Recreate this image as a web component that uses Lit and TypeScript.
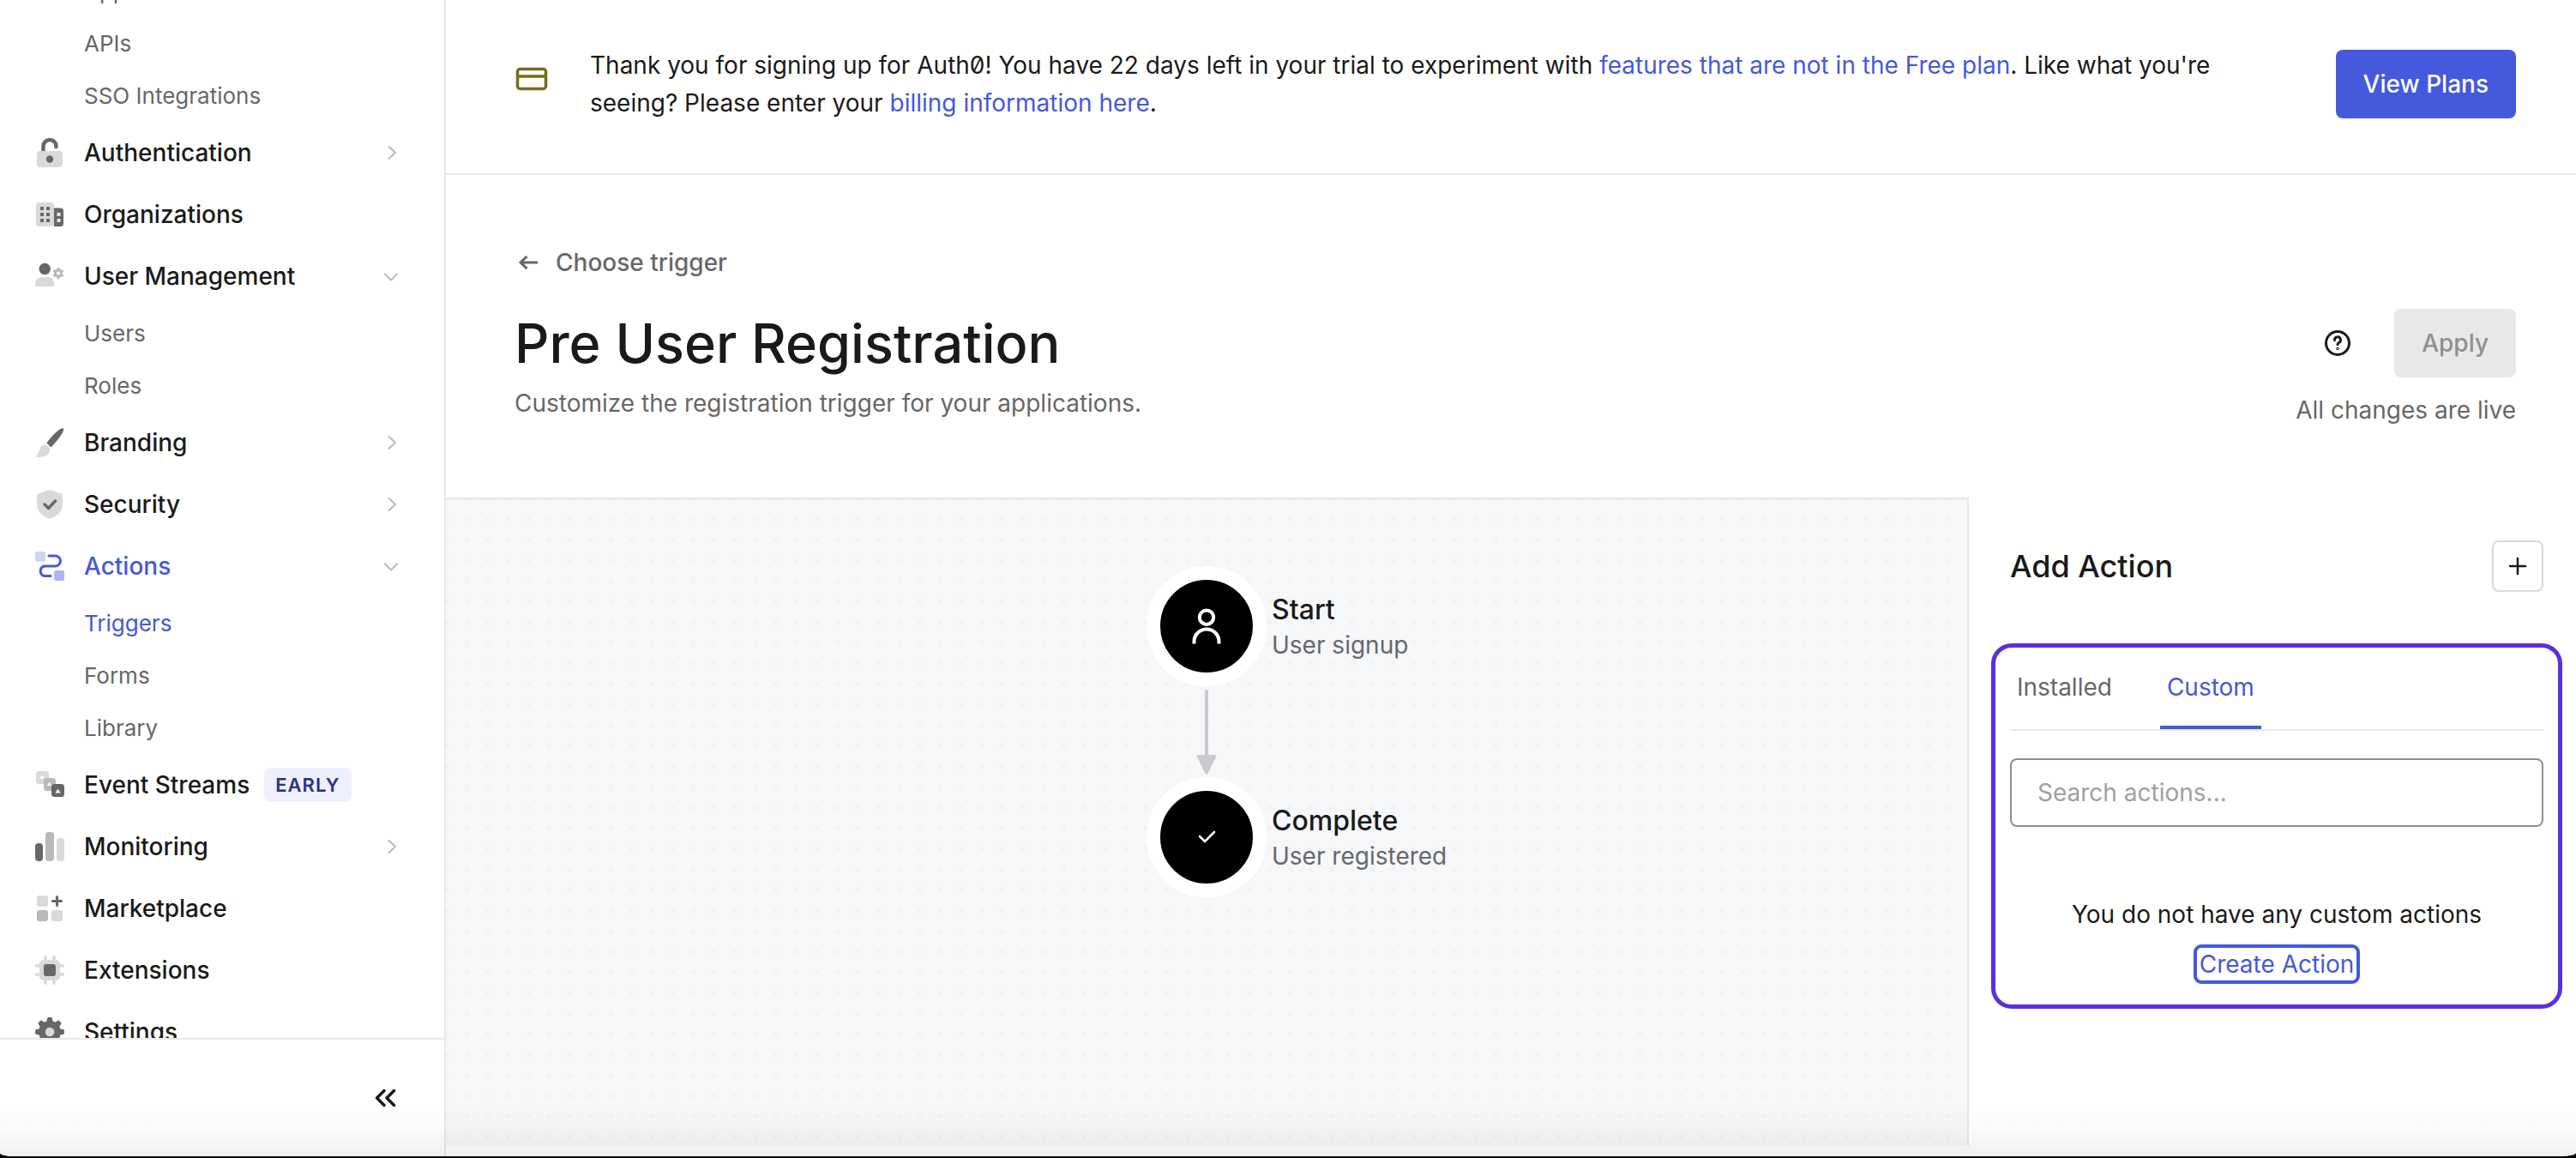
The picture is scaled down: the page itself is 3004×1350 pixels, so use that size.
import { LitElement, html, css, svg, nothing } from "lit";
import { customElement, query } from "lit/decorators.js";
import { classMap } from "lit/directives/class-map.js";

const LIGHT = "#d9d9d9";
const MID = "#b9b9b9";
const DARK = "#676767";

const gearPath = (cx: number, cy: number, teeth: number, inner: number, outer: number): string => {
  const points: string[] = [];
  const step = (Math.PI * 2) / teeth;
  for (let i = 0; i < teeth; i++) {
    const a = i * step - Math.PI / 2;
    for (const [f, r] of [[-0.3, inner], [-0.14, outer], [0.14, outer], [0.3, inner]]) {
      points.push(`${(cx + Math.cos(a + f * step) * r).toFixed(2)},${(cy + Math.sin(a + f * step) * r).toFixed(2)}`);
    }
  }
  return points.join(" ");
};

/* Navigation icons share a 36-unit box centred on its row. */
const icons: Record<string, unknown> = {
  lock: svg`<rect x="3" y="16" width="30" height="19" rx="4" fill=${LIGHT}/>
    <path d="M10.500 16V10.500a7.500 7.500 0 0 1 15 0V11" fill="none" stroke=${DARK} stroke-width="4.500"/>
    <circle cx="25.300" cy="11.300" r="2.200" fill=${DARK}/><circle cx="18" cy="25.500" r="4.200" fill=${DARK}/>`,
  organization: svg`<rect x="2" y="4" width="21" height="28" rx="3.500" fill=${LIGHT}/>
    <path d="M23 10.500h7.500a3.500 3.500 0 0 1 3.500 3.500v14.500a3.500 3.500 0 0 1-3.500 3.500H23z" fill=${DARK}/>
    <g fill=${DARK}>${[9, 16, 23].map((y) => svg`<rect x="7" y=${y} width="4" height="4" rx="0.500"/><rect x="14" y=${y} width="4" height="4" rx="0.500"/>`)}</g>
    <rect x="26.500" y="16" width="4" height="4" fill="#e8e8e8"/><rect x="26.500" y="23" width="4" height="4" fill="#e8e8e8"/>`,
  users: svg`<circle cx="12.200" cy="9.500" r="6.700" fill=${DARK}/>
    <path d="M1 27.500c0-5 3.500-8.500 8-8.500h7c4.500 0 7 3.500 7 8.500 0 1.800-.8 2.500-2.500 2.500H3.500C1.800 30 1 29.300 1 27.500z" fill=${LIGHT}/>
    <polygon points=${gearPath(28, 14.5, 6, 4.6, 6.2)} fill=${MID} stroke=${MID} stroke-linejoin="round"/><circle cx="28" cy="14.500" r="2" fill="#fff"/>`,
  brush: svg`<path d="M14.500 18.500C18 13 26 4 31.500 1.500c2-1 3.200.2 2.500 2.200C32 9.500 25 18 19.500 23.500z" fill=${DARK}/>
    <path d="M12.500 20.500c3 0 5.500 2.500 5.500 5.500 0 5.500-5 8.800-10 8.800-3 0-5 .2-6.300-.3 2-1 2.800-3.200 3.800-6.500 1.200-4.500 3.500-7.500 7-7.500z" fill=${LIGHT}/>`,
  shield: svg`<path d="M18 1l12.500 4.300C32.300 6 33 7 33 8.800V18c0 8-6.500 13.500-15 17C9.500 31.500 3 26 3 18V8.800C3 7 3.700 6 5.500 5.300z" fill=${LIGHT}/>
    <path d="M12 18l4.500 4.500L24.500 14" fill="none" stroke=${DARK} stroke-width="3.500" stroke-linecap="round" stroke-linejoin="round"/>`,
  actions: svg`<rect x="1" y="1" width="12" height="12" rx="2" fill="#cfd5f8"/><rect x="23" y="23" width="12" height="12" rx="2" fill="#adb6ef"/>
    <path d="M17 6h7.500a6 6 0 0 1 0 12h-13a6 6 0 0 0 0 11.500H19" fill="none" stroke="#4459dc" stroke-width="3" stroke-linecap="round"/>`,
  streams: svg`<rect x="2" y="2" width="15" height="15" rx="3.500" fill=${LIGHT}/><rect x="11" y="10" width="14" height="15" rx="3.500" fill=${MID}/>
    <rect x="20" y="17" width="15" height="15" rx="3.500" fill=${DARK}/><path d="M9 6.500l2 2v2l-5 1zM17.500 14.500l2.500 4.500h-5zM27.500 22.500l3 5h-6z" fill="#fff"/>`,
  bars: svg`<rect x="1" y="14" width="9" height="21" rx="4" fill=${DARK}/><rect x="13" y="1" width="10" height="34" rx="4" fill=${MID}/><rect x="26" y="8" width="9" height="27" rx="4" fill=${LIGHT}/>`,
  market: svg`<rect x="3" y="3" width="13" height="13" rx="3" fill=${LIGHT}/><rect x="3" y="20" width="13" height="13" rx="3" fill=${MID}/><rect x="20" y="20" width="13" height="13" rx="3" fill=${LIGHT}/>
    <path d="M26.500 4.500v10M21.500 9.500h10" stroke=${DARK} stroke-width="3" stroke-linecap="round"/>`,
  chip: svg`<path d="M13 2.500v31M23 2.500v31M2.500 13h31M2.500 23h31" stroke=${LIGHT} stroke-width="3.500" stroke-linecap="round"/><rect x="6" y="6" width="24" height="24" rx="5" fill=${LIGHT}/><rect x="11" y="11" width="14" height="14" rx="3" fill=${DARK}/>`,
  gear: svg`<polygon points=${gearPath(18, 18, 8, 12, 16)} fill=${DARK} stroke=${DARK} stroke-width="2" stroke-linejoin="round"/><circle cx="18" cy="18" r="5.300" fill=${LIGHT}/>`,
};

interface NavItem {
  label: string;
  icon?: string;
  active?: boolean;
  badge?: string;
  chevron?: "right" | "down";
}

const NAV: NavItem[] = [
  { label: "Applications" },
  { label: "APIs" },
  { label: "SSO Integrations" },
  { label: "Authentication", icon: "lock", chevron: "right" },
  { label: "Organizations", icon: "organization" },
  { label: "User Management", icon: "users", chevron: "down" },
  { label: "Users" },
  { label: "Roles" },
  { label: "Branding", icon: "brush", chevron: "right" },
  { label: "Security", icon: "shield", chevron: "right" },
  { label: "Actions", icon: "actions", chevron: "down", active: true },
  { label: "Triggers", active: true },
  { label: "Forms" },
  { label: "Library" },
  { label: "Event Streams", icon: "streams", badge: "EARLY" },
  { label: "Monitoring", icon: "bars", chevron: "right" },
  { label: "Marketplace", icon: "market" },
  { label: "Extensions", icon: "chip" },
  { label: "Settings", icon: "gear" },
];

const base = css`
  * { box-sizing: border-box; }
  a { color: inherit; text-decoration: none; }
  button, input { font: inherit; color: inherit; margin: 0; }
  button { cursor: pointer; }
  svg { display: block; flex: none; }
  h1, h2, h3, p, ul { margin: 0; padding: 0; font-weight: inherit; }
`;

@customElement("side-nav")
export class SideNav extends LitElement {
  @query(".scroll") scroller!: HTMLElement;

  static styles = [base, css`
    :host { display: flex; flex-direction: column; min-height: 0; border-right: 2px solid #e8e8e8; background: #fff; }
    .scroll { flex: 1; min-height: 0; overflow-y: auto; scrollbar-width: none; padding-bottom: 32px; }
    .list { list-style: none; }
    .row { display: flex; align-items: center; height: 72px; padding: 0 52px 0 40px; gap: 22px; font-size: 28px; font-weight: 500; color: #1a1a1a; }
    .sub { height: 61px; padding-left: 98px; font-size: 26px; font-weight: 400; color: #676767; }
    .active { color: #4459dc; }
    .badge { display: flex; align-items: center; height: 40px; padding: 0 13px; margin-left: -5px; border-radius: 8px; background: #eef0fd; color: #2a3181; font-size: 22px; font-weight: 600; letter-spacing: 1px; }
    .chevron { margin-left: auto; }
    .foot { display: flex; justify-content: flex-end; align-items: center; height: 138px; padding-right: 52px; border-top: 2px solid #e8e8e8; }
    .collapse { border: 0; background: none; padding: 0; }
  `];

  firstUpdated() {
    this.scroller.scrollTop = 41;
  }

  private renderItem(item: NavItem) {
    return html`<li>
      <a href="#" class=${classMap({ row: true, sub: !item.icon, active: !!item.active })}>
        ${item.icon ? html`<svg width="36" height="36" viewBox="0 0 36 36" aria-hidden="true">${icons[item.icon]}</svg>` : nothing}
        <span>${item.label}</span>
        ${item.badge ? html`<span class="badge">${item.badge}</span>` : nothing}
        ${item.chevron ? html`<svg class="chevron" width="20" height="20" viewBox="0 0 20 20" fill="none" stroke="#b9b9b9" stroke-width="2" stroke-linecap="round" stroke-linejoin="round" aria-hidden="true">
          ${item.chevron === "right" ? svg`<path d="M7.500 3l7.500 7-7.500 7"/>` : svg`<path d="M3 7.500l7 7 7-7"/>`}</svg>` : nothing}
      </a>
    </li>`;
  }

  render() {
    return html`
      <nav class="scroll" aria-label="Main"><ul class="list">${NAV.map((i) => this.renderItem(i))}</ul></nav>
      <div class="foot">
        <button class="collapse" aria-label="Collapse menu">
          <svg width="32" height="32" viewBox="0 0 32 32" fill="none" stroke="#1a1a1a" stroke-width="3.500" stroke-linecap="round" stroke-linejoin="round"><path d="M14 7.500L5.500 16l8.500 8.500M25.500 7.500L17 16l8.500 8.500"/></svg>
        </button>
      </div>`;
  }
}

@customElement("trial-banner")
export class TrialBanner extends LitElement {
  static styles = [base, css`
    :host { display: flex; align-items: flex-start; padding: 54px 70px 60px 80px; border-bottom: 2px solid #e8e8e8; }
    .card { margin: 16px 48px 0 0; }
    .text { flex: 1; max-width: 1900px; line-height: 44px; }
    .link { color: #4459dc; }
    .plans { margin: 4px 0 0 auto; height: 80px; padding: 0 32px; border: 0; border-radius: 8px; background: #4459dc; color: #fff; font-weight: 500; }
  `];

  render() {
    return html`
      <svg class="card" width="40" height="44" viewBox="0 0 40 44" fill="none" stroke="#796a1f" stroke-width="3.500" aria-hidden="true">
        <rect x="3.500" y="10.500" width="33" height="23" rx="3"/><path d="M3.500 19h33"/></svg>
      <p class="text">Thank you for signing up for Auth0! You have 22 days left in your trial to experiment with <a class="link" href="#">features that are not in the Free plan</a>. Like what you're seeing? Please enter your <a class="link" href="#">billing information here</a>.</p>
      <button class="plans">View Plans</button>`;
  }
}

@customElement("page-header")
export class PageHeader extends LitElement {
  static styles = [base, css`
    :host { display: flex; justify-content: space-between; align-items: flex-start; padding: 80px 70px 80px 80px; }
    .back { display: flex; align-items: center; gap: 16px; height: 44px; color: #676767; font-weight: 500; }
    .title { margin-top: 30px; font-size: 63px; line-height: 84px; font-weight: 500; color: #1a1a1a; }
    .subtitle { margin-top: 6px; line-height: 44px; color: #676767; }
    .side { display: flex; flex-direction: column; align-items: flex-end; gap: 16px; padding-top: 76px; }
    .controls { display: flex; align-items: center; gap: 48px; }
    .help { border: 0; padding: 0; background: none; }
    .apply { height: 80px; padding: 0 32px; border: 0; border-radius: 8px; background: #e8e8e8; color: #8f8f8f; font-weight: 500; }
    .state { line-height: 44px; color: #676767; }
  `];

  render() {
    return html`
      <div>
        <a class="back" href="#">
          <svg width="32" height="32" viewBox="0 0 32 32" fill="none" stroke="#676767" stroke-width="3" aria-hidden="true"><path d="M27 16H7M14.500 8.800L7 16l7.500 7.200"/></svg>
          <span>Choose trigger</span>
        </a>
        <h1 class="title">Pre User Registration</h1>
        <p class="subtitle">Customize the registration trigger for your applications.</p>
      </div>
      <div class="side">
        <div class="controls">
          <button class="help" aria-label="Help">
            <svg width="36" height="36" viewBox="0 0 36 36" fill="none" stroke="#1a1a1a" stroke-width="3" stroke-linecap="round"><circle cx="18" cy="18" r="13.500"/><path d="M14.500 14.500a3.500 3.500 0 1 1 5 3c-1 .6-1.500 1-1.500 2.200"/><circle cx="18" cy="24.500" r="0.500" stroke-width="2.500"/></svg>
          </button>
          <button class="apply" disabled>Apply</button>
        </div>
        <p class="state">All changes are live</p>
      </div>`;
  }
}

@customElement("flow-node")
export class FlowNode extends LitElement {
  static properties = { kind: {}, heading: {}, note: {} };
  declare kind: "start" | "end";
  declare heading: string;
  declare note: string;

  static styles = [base, css`
    :host { display: grid; grid-template-columns: 1fr 140px 1fr; align-items: center; width: 100%; }
    .disc { grid-column: 2; display: grid; place-items: center; width: 140px; height: 140px; border: 16px solid #fff; border-radius: 50%; background: #000; }
    .label { padding: 2px 0 0 6px; }
    .name { font-size: 32px; line-height: 42px; font-weight: 500; color: #1a1a1a; }
    .note { line-height: 40px; color: #65676e; }
  `];

  render() {
    return html`
      <div class="disc">
        <svg width="48" height="48" viewBox="0 0 48 48" fill="none" stroke="#fff" stroke-width="4" aria-hidden="true">
          ${this.kind === "start"
            ? svg`<circle cx="24" cy="13.700" r="8.200"/><path d="M9.500 44.500V42a14.500 14.500 0 0 1 29 0v2.500"/>`
            : svg`<path d="M16 23l6 6L33 18" stroke-width="2.500" stroke-linecap="round" stroke-linejoin="round"/>`}
        </svg>
      </div>
      <div class="label"><h3 class="name">${this.heading}</h3><p class="note">${this.note}</p></div>`;
  }
}

@customElement("flow-canvas")
export class FlowCanvas extends LitElement {
  static styles = [base, css`
    :host { display: flex; flex-direction: column; align-items: center; padding-top: 78px; border-top: 2px solid #e8e8e8; border-right: 2px solid #e8e8e8;
      background: #f6f7f9 conic-gradient(from 270deg at 5px 5px, #f2f2f2 90deg, transparent 0) -2px -3px / 24px 24px; }
    .arrow { margin: 4px 0 2px; }
  `];

  render() {
    return html`
      <flow-node kind="start" heading="Start" note="User signup"></flow-node>
      <svg class="arrow" width="24" height="100" viewBox="0 0 24 100" fill="#c9cace" aria-hidden="true"><path d="M10 0h4v76h7.500a1.800 1.800 0 0 1 1.500 2.600L13.300 98a1.500 1.500 0 0 1-2.600 0L1 78.600A1.800 1.800 0 0 1 2.500 76H10z"/></svg>
      <flow-node kind="end" heading="Complete" note="User registered"></flow-node>`;
  }
}

@customElement("action-panel")
export class ActionPanel extends LitElement {
  static styles = [base, css`
    :host { display: block; padding: 50px 16px 0 26px; }
    .head { display: flex; justify-content: space-between; align-items: center; padding: 0 22px; }
    .title { font-size: 36px; line-height: 48px; font-weight: 500; color: #1a1a1a; }
    .add { display: grid; place-items: center; width: 60px; height: 60px; padding: 0; border: 2px solid #d9d9d9; border-radius: 8px; background: #fff; }
    .frame { margin-top: 60px; padding: 17px 17px 24px; border: 5px solid #5a2fe0; border-radius: 24px; }
    .tabs { display: flex; gap: 48px; border-bottom: 2px solid #e8e8e8; }
    .tab { height: 78px; padding: 0 8px 16px; border: 0; border-bottom: 4px solid transparent; background: none; color: #676767; }
    .selected { border-bottom-color: #4459dc; color: #4459dc; }
    .search { display: block; width: 100%; height: 80px; margin-top: 32px; padding: 0 30px; border: 2px solid #8f8f8f; border-radius: 8px; background: #fff; outline: 0; }
    .search::placeholder { color: #a0a0a0; opacity: 1; }
    .empty { display: flex; flex-direction: column; align-items: center; gap: 12px; padding-top: 79px; line-height: 46px; color: #1a1a1a; }
    .create { padding: 0 3px; line-height: 38px; border: 4px solid #4459dc; border-radius: 9px; color: #4459dc; }
  `];

  render() {
    return html`
      <div class="head">
        <h2 class="title">Add Action</h2>
        <button class="add" aria-label="Add action"><svg width="24" height="24" viewBox="0 0 24 24" stroke="#1a1a1a" stroke-width="2.500" stroke-linecap="round"><path d="M12 3v18M3 12h18"/></svg></button>
      </div>
      <section class="frame">
        <div class="tabs" role="tablist">
          <button class="tab" role="tab" aria-selected="false">Installed</button>
          <button class="tab selected" role="tab" aria-selected="true">Custom</button>
        </div>
        <input class="search" type="search" aria-label="Search actions" placeholder="Search actions..." />
        <div class="empty">
          <p>You do not have any custom actions</p>
          <a class="create" href="#">Create Action</a>
        </div>
      </section>`;
  }
}

@customElement("app-root")
export class AppRoot extends LitElement {
  static styles = [base, css`
    :host { display: block; box-sizing: border-box; height: 100vh; padding-bottom: 2px; background: #000; font-family: Inter, "Liberation Sans", sans-serif; font-size: 28px; font-feature-settings: "zero"; color: #1a1a1a; }
    .window { position: relative; display: grid; grid-template: minmax(0, 1fr) / 520px minmax(0, 1fr); height: 100%; overflow: hidden; border-radius: 0 0 16px 16px / 0 0 4px 4px; background: #fff; }
    .window::after { content: ""; position: absolute; inset: auto 0 0 0; height: 64px; background: linear-gradient(transparent, rgba(0, 0, 0, 0.02) 50%, rgba(0, 0, 0, 0.06)); pointer-events: none; }
    .main { display: flex; flex-direction: column; min-height: 0; }
    .work { flex: 1; display: grid; grid-template-columns: minmax(0, 1fr) 708px; padding-bottom: 12px; }
  `];

  render() {
    return html`
      <div class="window">
        <side-nav></side-nav>
        <main class="main">
          <trial-banner></trial-banner>
          <page-header></page-header>
          <div class="work"><flow-canvas></flow-canvas><action-panel></action-panel></div>
        </main>
      </div>`;
  }
}
